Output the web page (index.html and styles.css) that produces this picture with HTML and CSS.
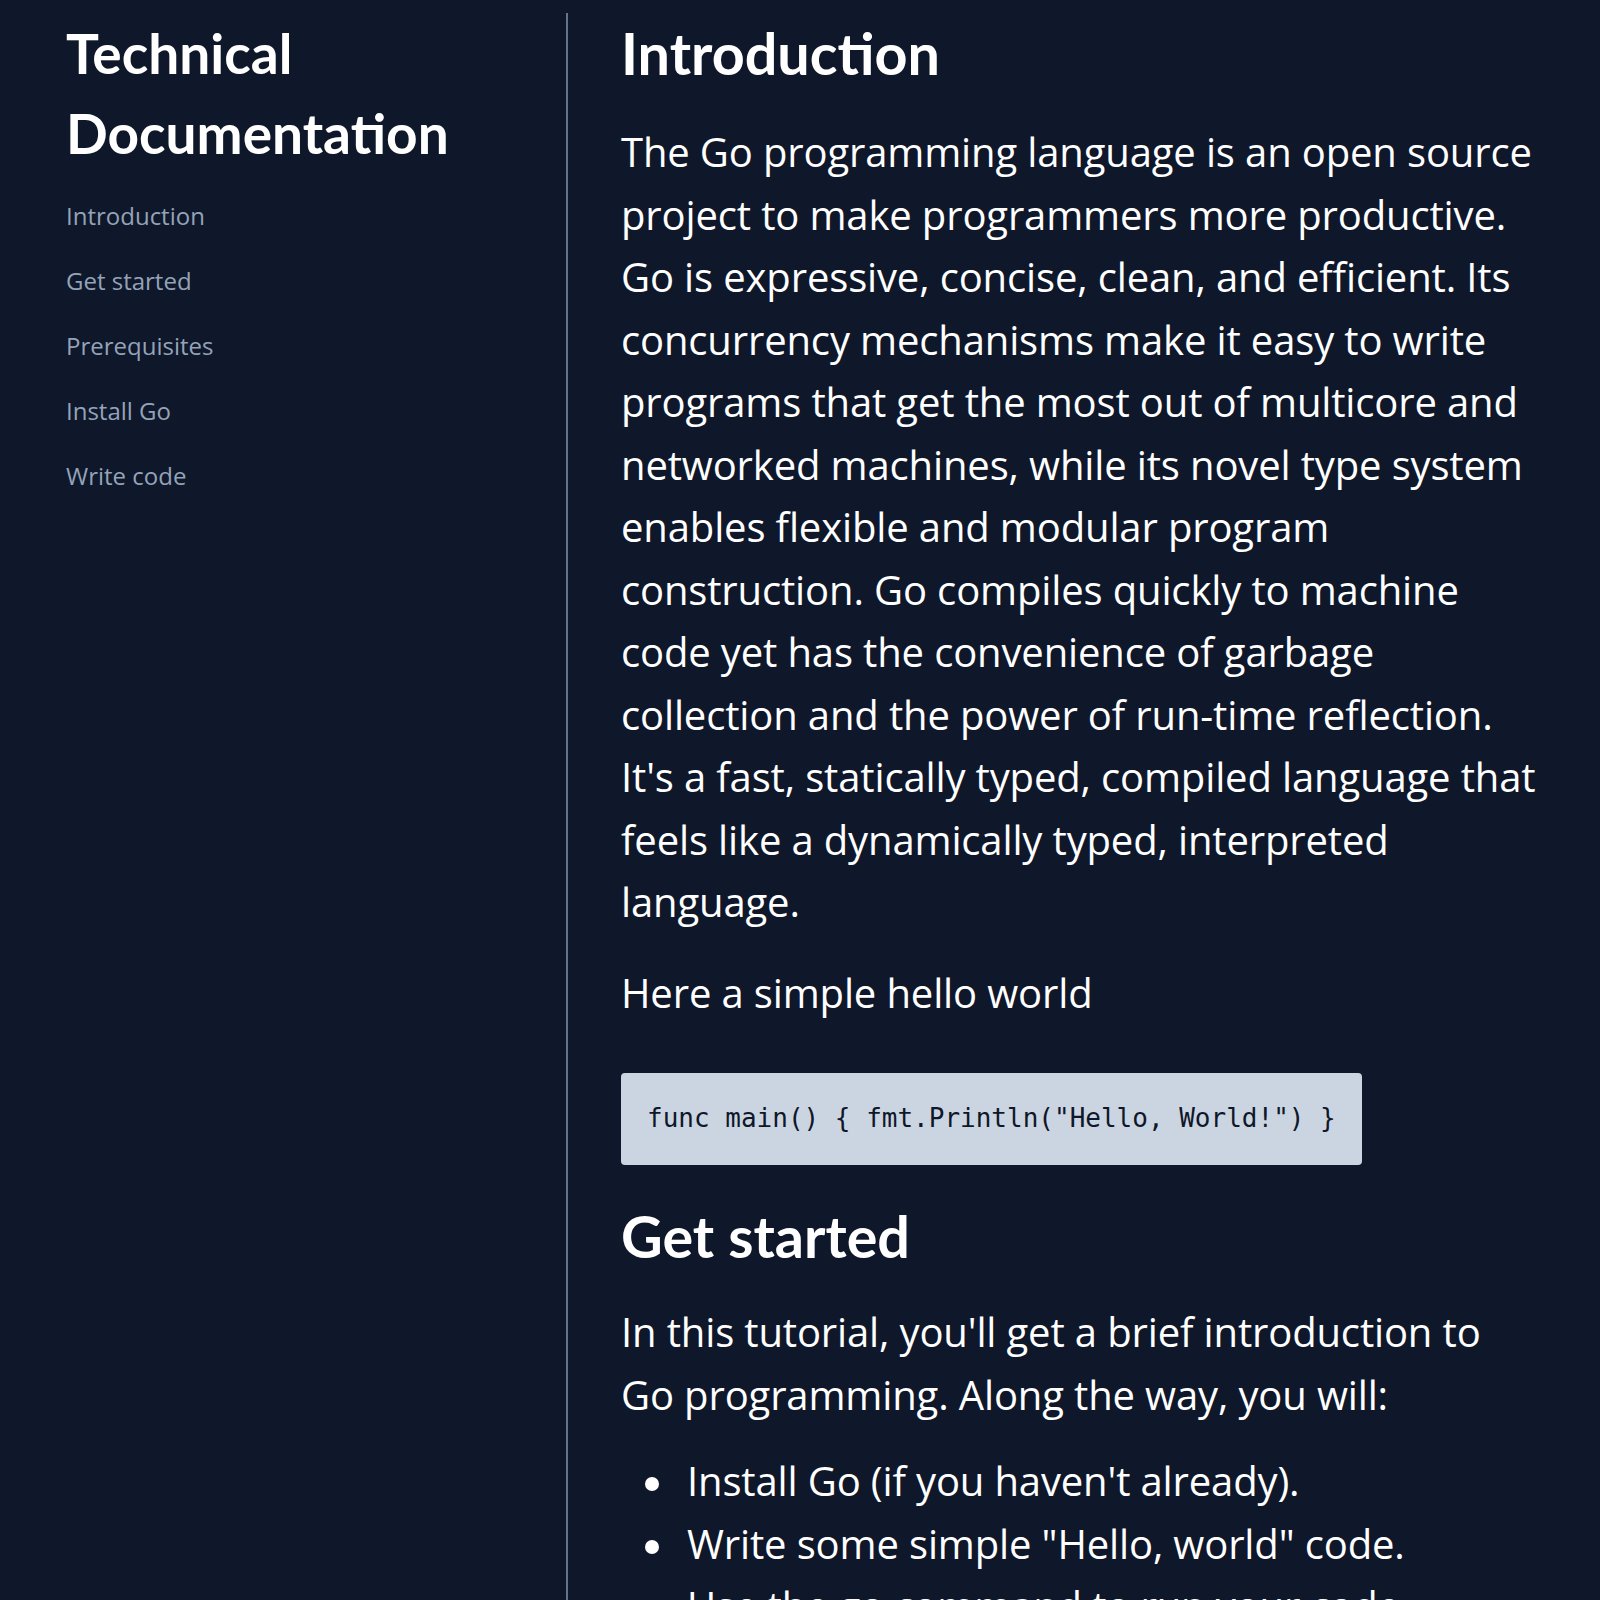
FILE: index.html
```html
<!DOCTYPE html>
<html lang="en">
<head>
<meta charset="utf-8">
<title>Technical Documentation</title>
<link rel="stylesheet" href="styles.css">
</head>
<body>
<div class="layout">
  <nav class="sidebar" id="navbar">
    <h1 class="site-title">Technical Documentation</h1>
    <ul class="nav-list">
      <li><a class="nav-link" href="#Introduction">Introduction</a></li>
      <li><a class="nav-link" href="#Get_started">Get started</a></li>
      <li><a class="nav-link" href="#Prerequisites">Prerequisites</a></li>
      <li><a class="nav-link" href="#Install_Go">Install Go</a></li>
      <li><a class="nav-link" href="#Write_code">Write code</a></li>
    </ul>
  </nav>
  <main class="content" id="main-doc">
    <section class="main-section" id="Introduction">
      <h2 class="section-title">Introduction</h2>
      <p class="text">The Go programming language is an open source project to make programmers more productive. Go is expressive, concise, clean, and efficient. Its concurrency mechanisms make it easy to write programs that get the most out of multicore and networked machines, while its novel type system enables flexible and modular program construction. Go compiles quickly to machine code yet has the convenience of garbage collection and the power of run-time reflection. It's a fast, statically typed, compiled language that feels like a dynamically typed, interpreted language.</p>
      <p class="text">Here a simple hello world</p>
      <pre class="code"><code>func main() { fmt.Println("Hello, World!") }</code></pre>
    </section>
    <section class="main-section" id="Get_started">
      <h2 class="section-title">Get started</h2>
      <p class="text">In this tutorial, you'll get a brief introduction to Go programming. Along the way, you will:</p>
      <ul class="bullets">
        <li class="bullet">Install Go (if you haven't already).</li>
        <li class="bullet">Write some simple "Hello, world" code.</li>
        <li class="bullet">Use the go command to run your code.</li>
        <li class="bullet">Use the Go package discovery tool to find packages you can use in your own code.</li>
        <li class="bullet">Call functions of an external module.</li>
      </ul>
    </section>
  </main>
</div>
</body>
</html>
```

FILE: styles.css
```css
html, body {
  margin: 0;
  padding: 0;
  background: #0f172a;
}

body {
  font-family: "Open Sans", Lato, sans-serif;
  color: #ffffff;
}

.layout {
  display: flex;
  align-items: stretch;
  padding-top: 13px;
  min-height: 1600px;
}

.sidebar {
  flex: 0 0 568px;
  box-sizing: border-box;
  padding-left: 66px;
  padding-right: 40px;
  border-right: 2px solid #64748b;
}

.site-title {
  margin: 0;
  font-family: Lato, "Open Sans", sans-serif;
  font-size: 55px;
  line-height: 80px;
  font-weight: 700;
  color: #ffffff;
}

.nav-list {
  list-style: none;
  margin: 10px 0 0;
  padding: 0;
}

.nav-link {
  display: block;
  font-size: 24px;
  line-height: 65px;
  color: #94a3b8;
  text-decoration: none;
}

.content {
  flex: 1;
  box-sizing: border-box;
  padding: 0 61px 0 53px;
}

.section-title {
  margin: 0;
  font-family: Lato, "Open Sans", sans-serif;
  font-size: 57.5px;
  line-height: 80px;
  font-weight: 700;
  color: #ffffff;
}

.text {
  margin: 28px 0 0;
  font-size: 40px;
  line-height: 62.5px;
  letter-spacing: -0.14px;
}

.code {
  width: fit-content;
  margin: 49px 0 0;
  padding: 24px 26px;
  background: #cbd5e1;
  color: #0f172a;
  border-radius: 4px;
  font-family: "Liberation Mono", "Courier New", monospace;
  font-size: 26px;
  line-height: 42px;
}

.main-section + .main-section .section-title {
  margin-top: 31px;
}

.main-section + .main-section .text {
  margin-top: 25px;
}

.bullets {
  list-style: none;
  margin: 24px 0 0;
  padding-left: 24px;
  font-size: 40px;
  line-height: 62.5px;
  letter-spacing: -0.14px;
}

.bullet {
  display: flex;
  align-items: flex-start;
}

.bullet::before {
  content: "";
  flex: none;
  width: 14px;
  height: 14px;
  margin: 27px 28px 0 0;
  border-radius: 50%;
  background: #ffffff;
}
```
